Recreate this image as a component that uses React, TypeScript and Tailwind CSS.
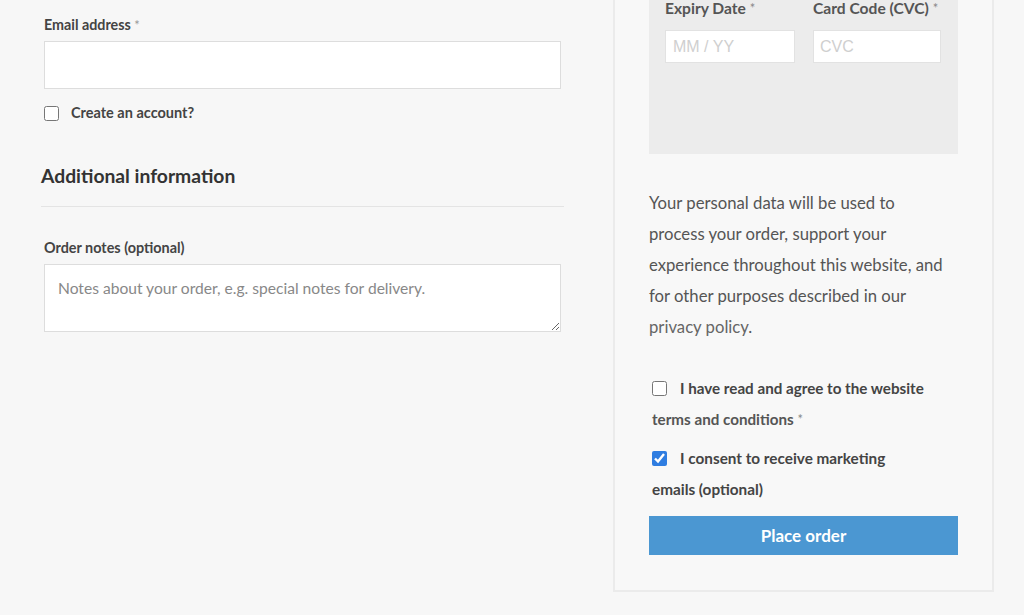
import React from 'react';

const Checkbox: React.FC<{ checked?: boolean }> = ({ checked }) => (
  <input
    type="checkbox"
    defaultChecked={checked}
    className="w-[15px] h-[15px] align-[-2px] accent-[#2f7de1] m-0"
  />
);

const App: React.FC = () => {
  return (
    <div className="w-[1024px] h-[615px] overflow-hidden bg-[#f7f7f7] font-['Lato',sans-serif] flex">
      {/* Левая колонка */}
      <div className="w-[523px] ml-[41px] shrink-0">
        <div className="mx-[3px]">
          <label className="block mt-[15px] mb-[6px] text-[14.3px] leading-[20px] font-bold text-[#444]">
            Email address <span className="text-[#999] font-normal text-[13px] align-top">*</span>
          </label>
          <input type="email" className="block w-full h-[48px] bg-white border border-[#dddddd] outline-none" />
          <label className="flex items-center gap-[12px] mt-[12px] text-[14.5px] leading-[24px] font-bold text-[#444]">
            <Checkbox />
            Create an account?
          </label>
        </div>

        <h3 className="mt-[37px] pb-[16px] border-b border-[#e4e4e4] text-[19.3px] leading-[28px] font-bold text-[#333]">
          Additional information
        </h3>

        <div className="mx-[3px]">
          <label className="block mt-[31px] mb-[6px] text-[14.4px] leading-[20px] font-bold text-[#444]">
            Order notes (optional)
          </label>
          <textarea
            placeholder="Notes about your order, e.g. special notes for delivery."
            className="block w-full h-[68px] bg-white border border-[#dddddd] px-[13px] py-[11px] text-[15.6px] leading-[24px] text-[#444] placeholder:text-[#888] outline-none resize-y"
          />
        </div>
      </div>

      {/* Правая панель */}
      <div className="ml-[49px] w-[381px] h-[592px] shrink-0 border-x-2 border-b-2 border-[#ebebeb] bg-[#f8f8f8] pl-[34px] pr-[32px]">
        <div className="w-[309px] h-[154px] bg-[#ececec] px-[16px] flex flex-col">
          <div className="flex gap-[18px] -mt-[2px]">
            <div className="w-[130px]">
              <div className="text-[15.6px] leading-[20px] font-bold text-[#555]">
                Expiry Date <span className="text-[#888] font-normal text-[13px] align-top">*</span>
              </div>
              <input
                placeholder="MM / YY"
                className="mt-[12px] block w-[130px] h-[33px] bg-white border border-[#e2e2e2] px-[7px] font-['Liberation_Sans',Arial,sans-serif] text-[16px] placeholder:text-[#cfcfcf] outline-none"
              />
            </div>
            <div className="w-[128px]">
              <div className="text-[15.6px] leading-[20px] font-bold text-[#555] whitespace-nowrap">
                Card Code (CVC) <span className="text-[#888] font-normal text-[13px] align-top">*</span>
              </div>
              <input
                placeholder="CVC"
                className="mt-[12px] block w-[128px] h-[33px] bg-white border border-[#e2e2e2] px-[6px] font-['Liberation_Sans',Arial,sans-serif] text-[16px] placeholder:text-[#cfcfcf] outline-none"
              />
            </div>
          </div>
        </div>

        <p className="mt-[34px] w-[300px] text-[16.7px] leading-[31px] text-[#555]">
          Your personal data will be used to process your order, support your experience throughout this website, and for other purposes described in our <span className="text-[#666]">privacy policy</span>.
        </p>

        <label className="block mt-[30px] pl-[3px] w-[309px] text-[15.2px] leading-[31px] font-bold text-[#444]">
          <Checkbox />
          <span className="ml-[13px]">I have read and agree to the website </span>
          <span className="text-[#555]">terms and conditions</span>{' '}
          <span className="text-[#888] font-normal text-[13px] align-top">*</span>
        </label>

        <label className="block mt-[8px] pl-[3px] w-[260px] text-[15.3px] leading-[31px] font-bold text-[#444]">
          <Checkbox checked />
          <span className="ml-[13px]">I consent to receive marketing emails (optional)</span>
        </label>

        <button className="mt-[11px] w-[309px] h-[39px] bg-[#4b97d2] text-white text-[17px] font-bold">
          Place order
        </button>
      </div>
    </div>
  );
};

export default App;
